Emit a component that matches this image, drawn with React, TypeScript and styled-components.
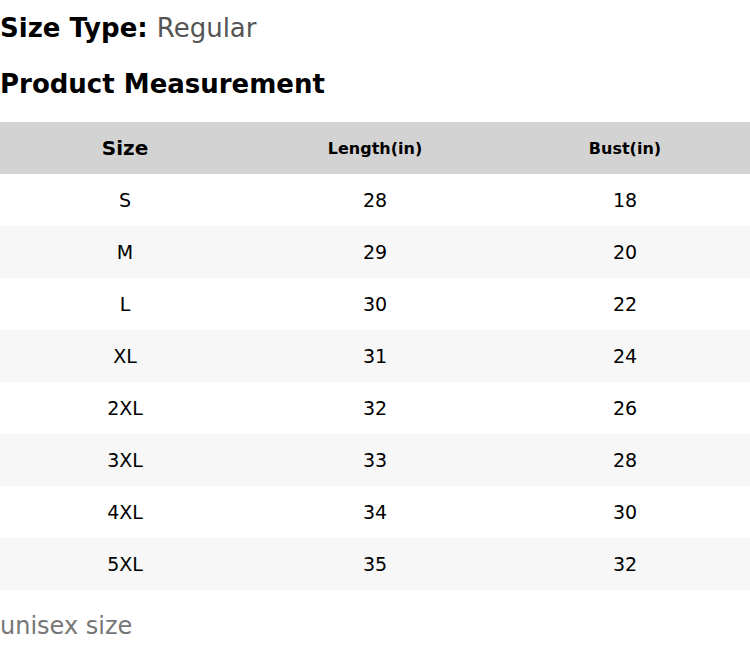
import React from "react";
import styled, { createGlobalStyle } from "styled-components";

const Global = createGlobalStyle`
  body { margin: 0; background: #fff; font-family: "DejaVu Sans", sans-serif; color: #000; }
`;

const Page = styled.div`
  width: 750px;
  display: flex;
  flex-direction: column;
`;

const TypeLine = styled.div`
  font-size: 26px;
  line-height: 30px;
  padding-top: 13px;
  font-weight: bold;
`;

const TypeValue = styled.span`
  font-weight: normal;
  color: #555;
`;

const Title = styled.h2`
  margin: 0;
  padding-top: 26px;
  font-size: 26px;
  line-height: 30px;
  font-weight: bold;
`;

const Table = styled.div`
  margin-top: 23px;
  display: grid;
  grid-template-columns: repeat(3, 1fr);
`;

const HeadCell = styled.div<{ $big?: boolean }>`
  height: 52px;
  background: #d3d3d3;
  display: flex;
  align-items: center;
  justify-content: center;
  font-weight: bold;
  font-size: ${(p) => (p.$big ? "20px" : "16px")};
`;

const Cell = styled.div<{ $alt: boolean }>`
  height: 52px;
  background: ${(p) => (p.$alt ? "#f7f7f7" : "#fff")};
  display: flex;
  align-items: center;
  justify-content: center;
  font-size: 19px;
`;

const Note = styled.div`
  margin-top: 22px;
  font-size: 24px;
  color: #777;
`;

const rows: [string, string, string][] = [
  ["S", "28", "18"],
  ["M", "29", "20"],
  ["L", "30", "22"],
  ["XL", "31", "24"],
  ["2XL", "32", "26"],
  ["3XL", "33", "28"],
  ["4XL", "34", "30"],
  ["5XL", "35", "32"],
];

export default function App() {
  return (
    <Page>
      <Global />
      <TypeLine>
        Size Type: <TypeValue>Regular</TypeValue>
      </TypeLine>
      <Title>Product Measurement</Title>
      <Table>
        <HeadCell $big>Size</HeadCell>
        <HeadCell>Length(in)</HeadCell>
        <HeadCell>Bust(in)</HeadCell>
        {rows.map((r, i) =>
          r.map((v, j) => (
            <Cell key={`${i}-${j}`} $alt={i % 2 === 1}>
              {v}
            </Cell>
          ))
        )}
      </Table>
      <Note>unisex size</Note>
    </Page>
  );
}
